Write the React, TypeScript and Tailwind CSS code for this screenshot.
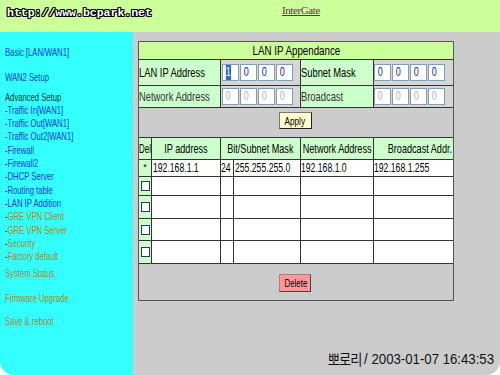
import React from "react";

const sans = "font-['Liberation_Sans',Arial,sans-serif]";

const menu: { label: string; color: string; dash?: boolean; gap?: string }[] = [
  { label: "Basic [LAN/WAN1]", color: "text-[#1040d0]", gap: "mt-[14px]" },
  { label: "WAN2 Setup", color: "text-[#1040d0]", gap: "mt-[12px]" },
  { label: "Advanced Setup", color: "text-[#0a3a30]", gap: "mt-[6px]" },
  { label: "Traffic In[WAN1]", color: "text-[#1040d0]", dash: true },
  { label: "Traffic Out[WAN1]", color: "text-[#1040d0]", dash: true },
  { label: "Traffic Out2[WAN1]", color: "text-[#1040d0]", dash: true },
  { label: "Firewall", color: "text-[#1040d0]", dash: true },
  { label: "Firewall2", color: "text-[#1040d0]", dash: true },
  { label: "DHCP Server", color: "text-[#1040d0]", dash: true },
  { label: "Routing table", color: "text-[#1040d0]", dash: true },
  { label: "LAN IP Addition", color: "text-[#1040d0]", dash: true },
  { label: "GRE VPN Client", color: "text-[#a08a30]", dash: true },
  { label: "GRE VPN Server", color: "text-[#a08a30]", dash: true },
  { label: "Security", color: "text-[#a08a30]", dash: true },
  { label: "Factory default", color: "text-[#a08a30]", dash: true },
  { label: "System Status", color: "text-[#a08a30]", gap: "mt-[4px]" },
  { label: "Firmware Upgrade", color: "text-[#a08a30]", gap: "mt-[11px]" },
  { label: "Save & reboot", color: "text-[#a08a30]", gap: "mt-[10px]" },
];

// the old page font is tall and narrow; squeeze the text sideways
function Nl({ children }: { children: React.ReactNode }) {
  return <span className="inline-block whitespace-nowrap origin-left scale-x-[0.72]">{children}</span>;
}
function Nc({ children }: { children: React.ReactNode }) {
  return <span className="inline-block whitespace-nowrap origin-center scale-x-[0.7]">{children}</span>;
}

function Octets({ values, disabled, first }: { values: string[]; disabled?: boolean; first?: boolean }) {
  return (
    <div className="flex gap-[1px] items-center h-full">
      {values.map((v, i) => (
        <div
          key={i}
          className={`w-[17px] h-[17px] shrink-0 bg-white border border-[#7f9db9] pl-[2px] text-[12px] leading-[15px] ${
            disabled ? "text-[#b0b0b0]" : "text-[#1010d0]"
          }`}
        >
          {first && i === 0 ? (
            <span className="inline-block scale-x-[0.75] bg-[#316ac5] text-white">1</span>
          ) : (
            <span className="inline-block scale-x-[0.75]">{v}</span>
          )}
        </div>
      ))}
    </div>
  );
}

const rows = [
  { del: "*", ip: "192.168.1.1", bit: "24", mask: "255.255.255.0", net: "192.168.1.0", bc: "192.168.1.255", h: "h-[17px]" },
  { h: "h-[19px]" },
  { h: "h-[23px]" },
  { h: "h-[22px]" },
  { h: "h-[23px]" },
];

export default function App() {
  return (
    <div className={`w-[500px] h-[375px] bg-white ${sans}`}>
      <div className="h-full flex flex-col rounded-b-[14px] overflow-hidden">
        <div className="h-[32px] bg-[#ccff99] flex items-start shrink-0">
          <div className="ml-[7px] mt-[4px] font-['Liberation_Mono',monospace] font-bold text-[11.5px] text-white [text-shadow:1px_0_0_#000,-1px_0_0_#000,0_1px_0_#000,0_-1px_0_#000,1px_1px_0_#000,-1px_-1px_0_#000,1px_-1px_0_#000,-1px_1px_0_#000]">
            http://www.bcpark.net
          </div>
          <div className="ml-[130px] mt-[2px] font-['Liberation_Serif',serif] text-[11px] text-[#6b2a5e] underline tracking-[-0.4px]">
            InterGate
          </div>
        </div>
        <div className="flex flex-1">
          <div className="w-[133px] shrink-0 bg-[#33ffff] pl-[5px] text-[10.5px] leading-[13.3px]">
            <div className="flex flex-col origin-left scale-x-[0.73]">
              {menu.map((m) => (
                <div key={m.label} className={`${m.gap ?? ""} ${m.color} whitespace-nowrap`}>
                  {m.dash && <span className="text-[#222]">-</span>}
                  {m.label}
                </div>
              ))}
            </div>
          </div>
          <div className="flex-1 bg-[#cccccc] flex flex-col pl-[5px] pt-[9px]">
            <div className="w-[316px] border border-[#555] text-[13px] text-black">
              <div className="h-[18px] bg-[#ccff99] border-b border-[#333] flex items-center justify-center">
                <span className="inline-block whitespace-nowrap scale-x-[0.75]">LAN IP Appendance</span>
              </div>
              <div className="flex h-[26px] border-b border-[#333]">
                <div className="w-[82px] shrink-0 bg-[#ccffcc] border-r border-[#333] flex items-center">
                  <Nl>LAN IP Address</Nl>
                </div>
                <div className="w-[80px] shrink-0 border-r border-[#333] bg-[#d6d6d6] pl-[1px]">
                  <Octets values={["1", "0", "0", "0"]} first />
                </div>
                <div className="w-[73px] shrink-0 bg-[#ccffcc] border-r border-[#333] flex items-center">
                  <Nl>Subnet Mask</Nl>
                </div>
                <div className="flex-1 bg-[#d6d6d6]">
                  <Octets values={["0", "0", "0", "0"]} />
                </div>
              </div>
              <div className="flex h-[22px] border-b border-[#333] text-[#333]">
                <div className="w-[82px] shrink-0 bg-[#ccffcc] border-r border-[#333] flex items-center">
                  <Nl>Network Address</Nl>
                </div>
                <div className="w-[80px] shrink-0 border-r border-[#333] bg-[#d6d6d6] pl-[1px]">
                  <Octets values={["0", "0", "0", "0"]} disabled />
                </div>
                <div className="w-[73px] shrink-0 bg-[#ccffcc] border-r border-[#333] flex items-center">
                  <Nl>Broadcast</Nl>
                </div>
                <div className="flex-1 bg-[#d6d6d6]">
                  <Octets values={["0", "0", "0", "0"]} disabled />
                </div>
              </div>
              <div className="h-[30px] border-b border-[#333] flex justify-center pt-[4px]">
                <button className="w-[33px] h-[17px] bg-[#ffffcc] border border-[#777] border-b-[#222] border-r-[#222] text-[11px] leading-[14px] ml-[-2px]">
                  <span className="inline-block scale-x-[0.75]">Apply</span>
                </button>
              </div>
              <div className="flex h-[22px] border-b border-[#333] bg-[#ccffcc] items-stretch">
                <div className="w-[13px] shrink-0 border-r border-[#333] flex items-center justify-center text-[12px]">
                  <span className="inline-block whitespace-nowrap scale-x-[0.66]">Del</span>
                </div>
                <div className="w-[69px] shrink-0 border-r border-[#333] flex items-center justify-center">
                  <Nc>IP address</Nc>
                </div>
                <div className="w-[80px] shrink-0 border-r border-[#333] flex items-center justify-center">
                  <Nc>Bit/Subnet Mask</Nc>
                </div>
                <div className="w-[73px] shrink-0 border-r border-[#333] flex items-center justify-center">
                  <Nc>Network Address</Nc>
                </div>
                <div className="flex-1 flex items-center justify-center">
                  <Nc>Broadcast Addr.</Nc>
                </div>
              </div>
              {rows.map((r, i) => (
                <div key={i} className={`flex ${r.h} border-b border-[#333] bg-white text-[12px]`}>
                  <div className="w-[13px] shrink-0 border-r border-[#333] bg-[#ccffcc] flex items-center justify-center">
                    {r.del ? (
                      <span className="text-[9px]">*</span>
                    ) : (
                      <span className="w-[9px] h-[10px] border border-[#1c3f5c] bg-white" />
                    )}
                  </div>
                  <div className="w-[69px] shrink-0 border-r border-[#333] flex items-center pl-[1px]">
                    <Nl>{r.ip}</Nl>
                  </div>
                  <div className="w-[13px] shrink-0 border-r border-[#333] flex items-center">
                    <Nl>{r.bit}</Nl>
                  </div>
                  <div className="w-[67px] shrink-0 border-r border-[#333] flex items-center pl-[1px]">
                    <Nl>{r.mask}</Nl>
                  </div>
                  <div className="w-[73px] shrink-0 border-r border-[#333] flex items-center">
                    <Nl>{r.net}</Nl>
                  </div>
                  <div className="flex-1 flex items-center">
                    <Nl>{r.bc}</Nl>
                  </div>
                </div>
              ))}
              <div className="h-[36px] flex justify-center pt-[10px]">
                <button className="w-[32px] h-[18px] bg-[#ff9999] border border-[#bb7777] border-b-[#444] border-r-[#444] text-[11px] leading-[15px] ml-[-2px]">
                  <span className="inline-block scale-x-[0.72]">Delete</span>
                </button>
              </div>
            </div>
            <div className="mt-auto mb-[5px] self-end mr-[6px] text-[15px] text-[#111] flex items-center origin-right scale-x-[0.88] whitespace-nowrap">
              <span className="font-['Noto_Sans_CJK_KR',sans-serif] text-[15px] tracking-[-1px]">뽀로리</span>
              <span className="ml-[3px]">/ 2003-01-07 16:43:53</span>
            </div>
          </div>
        </div>
      </div>
    </div>
  );
}
